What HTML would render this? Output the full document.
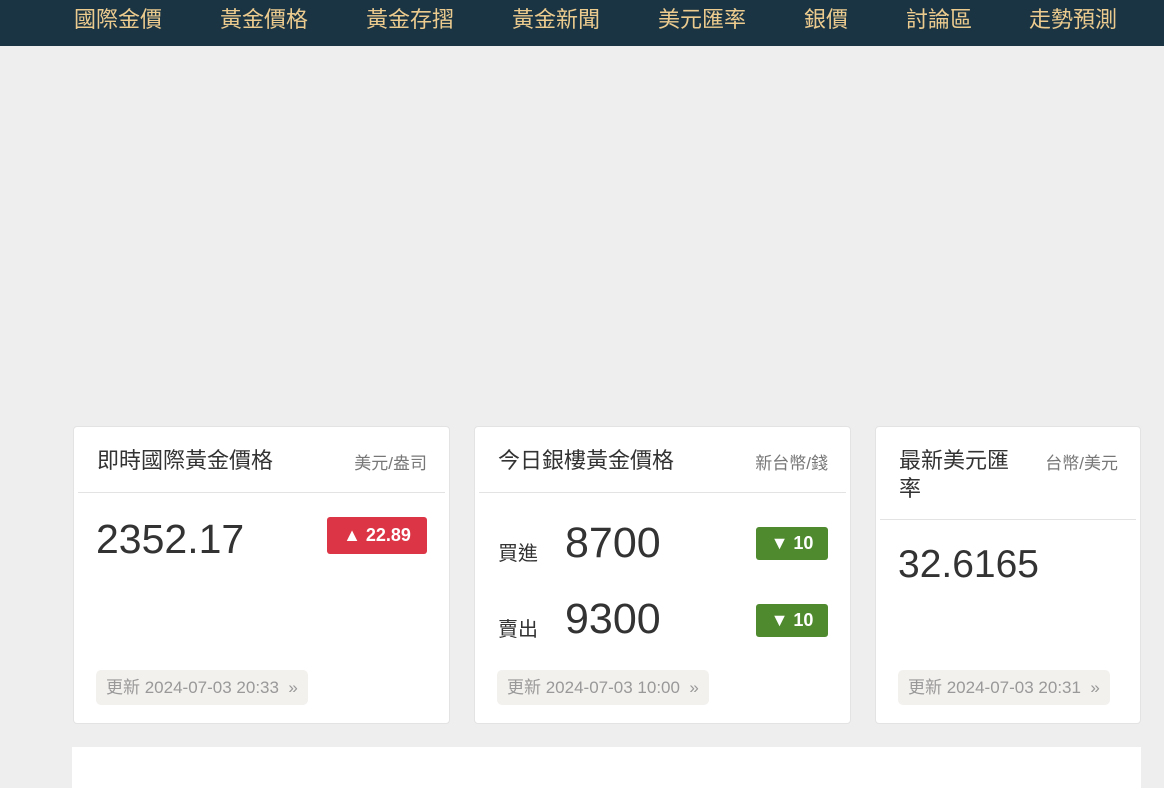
<!DOCTYPE html>
<html><head><meta charset="utf-8"><style>
*{margin:0;padding:0;box-sizing:border-box}
html,body{width:1164px;height:788px;overflow:hidden}
body{background:#eeeeee;font-family:"Liberation Sans","Noto Sans CJK TC",sans-serif;color:#333;position:relative}
.nav{position:absolute;left:0;top:0;width:1164px;height:46px;background:#1b3444}
.nav span{position:absolute;top:6px;font-size:22px;color:#eccb8e;transform:translateX(-50%);white-space:nowrap;line-height:28px}
.card{position:absolute;top:426px;height:298px;background:#fff;border-radius:4px;border:1px solid #e3e3e3}
.hd{position:absolute;left:4px;right:4px;top:0;height:66px;border-bottom:1px solid #e3e3e3}
.t{position:absolute;left:19px;top:20px;font-size:22px;line-height:28px;color:#333}
.u{position:absolute;right:18px;top:22px;font-size:17px;color:#777}
.big{position:absolute;font-size:41px;color:#333;line-height:50px}
.badge{position:absolute;color:#fff;font-weight:bold;font-size:18px;border-radius:3px;text-align:center}
.up{background:#dc3545}.dn{background:#4f8a2e}
.ft{position:absolute;left:22px;top:243px;height:35px;background:#f3f1ee;border-radius:5px;padding:0 10px;font-size:17px;line-height:35px;color:#999;white-space:nowrap}
.lb{position:absolute;left:23px;font-size:20px;color:#333}
</style></head><body>
<div class="nav">
<span style="left:118px">國際金價</span><span style="left:264px">黃金價格</span><span style="left:410px">黃金存摺</span><span style="left:556px">黃金新聞</span><span style="left:702px">美元匯率</span><span style="left:826px">銀價</span><span style="left:939px">討論區</span><span style="left:1073px">走勢預測</span>
</div>
<div class="card" style="left:73px;width:377px">
<div class="hd"><div class="t">即時國際黃金價格</div><div class="u">美元/盎司</div></div>
<div class="big" style="left:22px;top:87px">2352.17</div>
<div class="badge up" style="left:253px;top:90px;width:100px;height:37px;line-height:37px">▲ 22.89</div>
<div class="ft">更新 2024-07-03 20:33 &nbsp;»</div>
</div>
<div class="card" style="left:474px;width:377px">
<div class="hd"><div class="t">今日銀樓黃金價格</div><div class="u">新台幣/錢</div></div>
<div class="lb" style="top:110px">買進</div>
<div class="big" style="left:90px;top:91px;font-size:43px">8700</div>
<div class="badge dn" style="left:281px;top:100px;width:72px;height:33px;line-height:33px">▼ 10</div>
<div class="lb" style="top:186px">賣出</div>
<div class="big" style="left:90px;top:167px;font-size:43px">9300</div>
<div class="badge dn" style="left:281px;top:177px;width:72px;height:33px;line-height:33px">▼ 10</div>
<div class="ft">更新 2024-07-03 10:00 &nbsp;»</div>
</div>
<div class="card" style="left:875px;width:266px">
<div class="hd" style="height:93px"><div class="t" style="width:130px">最新美元匯率</div><div class="u">台幣/美元</div></div>
<div class="big" style="left:22px;top:113px;font-size:39px">32.6165</div>
<div class="ft">更新 2024-07-03 20:31 &nbsp;»</div>
</div>
<div style="position:absolute;left:72px;top:747px;width:1069px;height:41px;background:#fff"></div>
</body></html>
